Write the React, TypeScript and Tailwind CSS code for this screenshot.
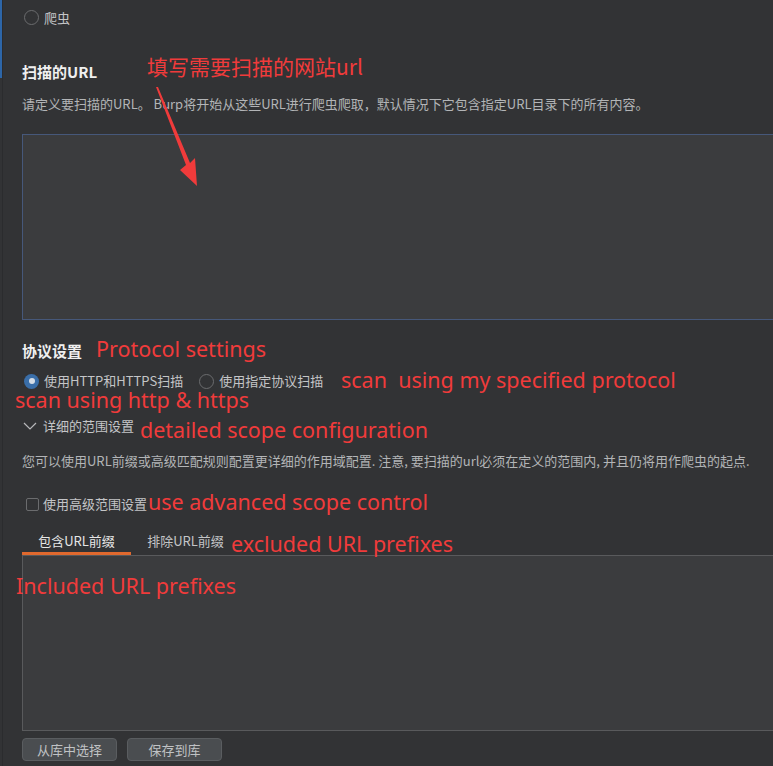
import React from "react";

const cjk = { fontFamily: '"Noto Sans CJK SC", "Noto Sans", sans-serif' };
const ann = { fontFamily: '"Noto Sans", "Noto Sans CJK SC", sans-serif' };

function Radio({ checked }: { checked?: boolean }) {
  if (checked) {
    return (
      <span className="flex h-[15px] w-[15px] shrink-0 items-center justify-center rounded-full bg-[#3a6ea8]">
        <span className="h-[6px] w-[6px] rounded-full bg-[#d6dde6]" />
      </span>
    );
  }
  return <span className="block h-[15px] w-[15px] shrink-0 rounded-full border-[1.5px] border-[#6b6c6e]" />;
}

function Note({ x, y, children }: { x: number; y: number; children: React.ReactNode }) {
  return (
    <div
      className="absolute whitespace-pre text-[21.5px] leading-[20px] text-[#f03b3b]"
      style={{ ...ann, left: x, top: y - 10 }}
    >
      {children}
    </div>
  );
}

export default function App() {
  return (
    <div className="relative flex h-[766px] w-[773px] overflow-hidden bg-[#323335]" style={cjk}>
      <div className="flex w-[3px] shrink-0 flex-col border-r border-[#2b2c2e]">
        <div className="h-[78px] w-[2px] bg-[#2d66a8]" />
      </div>
      <div className="flex flex-1 flex-col pl-[19px]">
        <div className="mt-[10px] flex h-[15px] items-center gap-[5px] pl-[2px]">
          <Radio />
          <span className="text-[13px] text-[#c4c5c7]">爬虫</span>
        </div>

        <div className="mt-[38px] h-[18px] text-[15px] font-bold leading-[18px] text-[#f0f0f0]">扫描的URL</div>
        <div className="mt-[15px] h-[16px] whitespace-nowrap text-[13px] leading-[16px] text-[#b3b5b7]">
          请定义要扫描的URL。 Burp将开始从这些URL进行爬虫爬取，默认情况下它包含指定URL目录下的所有内容。
        </div>
        <div className="mt-[22px] h-[186px] w-[770px] border border-[#46587a] bg-[#3b3c3e]" />

        <div className="mt-[22px] h-[18px] text-[15px] font-bold leading-[18px] text-[#f0f0f0]">协议设置</div>
        <div className="mt-[13px] flex h-[16px] items-center pl-[2px] text-[13px] leading-[16px] text-[#c4c5c7]">
          <Radio checked />
          <span className="ml-[5px] whitespace-nowrap">使用HTTP和HTTPS扫描</span>
          <span className="ml-[16px] flex">
            <Radio />
          </span>
          <span className="ml-[5px] whitespace-nowrap">使用指定协议扫描</span>
        </div>

        <div className="mt-[29px] flex h-[16px] items-center text-[13px] text-[#c4c5c7]">
          <svg width="14" height="10" viewBox="0 0 14 10" className="ml-[1px]">
            <polyline points="1,2 7,8 13,2" fill="none" stroke="#b8b9bb" strokeWidth="1.2" />
          </svg>
          <span className="ml-[6px]">详细的范围设置</span>
        </div>
        <div className="mt-[19px] h-[16px] whitespace-nowrap text-[13px] leading-[16px] text-[#b3b5b7]">
          您可以使用URL前缀或高级匹配规则配置更详细的作用域配置. 注意, 要扫描的url必须在定义的范围内, 并且仍将用作爬虫的起点.
        </div>

        <div className="mt-[27px] flex h-[16px] items-center text-[13px] text-[#c4c5c7]">
          <span className="ml-[4px] h-[13px] w-[13px] rounded-[2px] border border-[#6b6c6e]" />
          <span className="ml-[4px]">使用高级范围设置</span>
        </div>

        <div className="mt-[18px] flex h-[25px] text-[13px]">
          <div className="flex w-[109px] items-center justify-center border-b-[3px] border-[#e0692e] text-[#e6e6e6]">
            包含URL前缀
          </div>
          <div className="flex w-[109px] items-center justify-center pb-[3px] text-[#c4c5c7]">排除URL前缀</div>
        </div>
        <div className="h-[176px] w-[770px] border border-[#595a5c] bg-[#3b3c3e]" />

        <div className="mt-[7px] flex gap-[10px]">
          <button className="h-[23px] w-[95px] rounded-[4px] border border-[#5a5d60] bg-[#4a4d50] text-[13px] text-[#c0c2c4]">
            从库中选择
          </button>
          <button className="h-[23px] w-[95px] rounded-[4px] border border-[#5a5d60] bg-[#4a4d50] text-[13px] text-[#c0c2c4]">
            保存到库
          </button>
        </div>
      </div>

      <svg className="absolute left-0 top-0" width="773" height="766" style={{ pointerEvents: "none" }}>
        <polygon points="156,87 158,87 190,163 195,158 197,186 180,170 186,165" fill="#f03b3b" />
      </svg>

      <div
        className="absolute whitespace-pre text-[21px] leading-[26px] text-[#f03b3b]"
        style={{ ...cjk, left: 147, top: 53 }}
      >
        填写需要扫描的网站url
      </div>
      <Note x={96} y={349}>Protocol settings</Note>
      <Note x={341} y={380}>scan  using my specified protocol</Note>
      <Note x={15} y={400}>scan using http &amp; https</Note>
      <Note x={140} y={430}>detailed scope configuration</Note>
      <Note x={148} y={502}>use advanced scope control</Note>
      <Note x={231} y={544}>excluded URL prefixes</Note>
      <Note x={16} y={586}>Included URL prefixes</Note>
    </div>
  );
}
